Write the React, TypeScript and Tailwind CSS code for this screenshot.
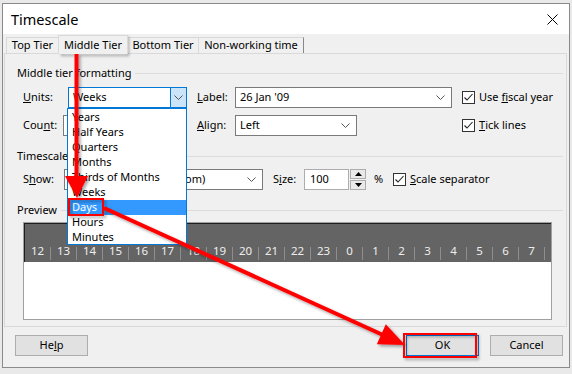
import React from "react";

const hours = [12, 13, 14, 15, 16, 17, 18, 19, 20, 21, 22, 23, 0, 1, 2, 3, 4, 5, 6, 7];
const units = ["Years", "Half Years", "Quarters", "Months", "Thirds of Months", "Weeks", "Days", "Hours", "Minutes"];

function Chevron() {
  return (
    <svg width="9" height="5" viewBox="0 0 9 5" className="shrink-0">
      <path d="M0.5 0.5 L4.5 4.5 L8.5 0.5" fill="none" stroke="#555" strokeWidth="1" />
    </svg>
  );
}

function Check({ label }: { label: React.ReactNode }) {
  return (
    <div className="flex items-center">
      <div className="w-[13px] h-[13px] border border-[#333] bg-white flex items-center justify-center">
        <svg width="11" height="11" viewBox="0 0 11 11">
          <path d="M1.5 5.5 L4 8 L9.5 2" fill="none" stroke="#222" strokeWidth="1.1" />
        </svg>
      </div>
      <span className="ml-[4px]">{label}</span>
    </div>
  );
}

function Combo({ text, className }: { text: string; className: string }) {
  return (
    <div className={`h-[21px] border border-[#7a7a7a] bg-white flex items-center pl-[4px] pr-[6px] ${className}`}>
      <span className="flex-1 whitespace-nowrap overflow-hidden">{text}</span>
      <Chevron />
    </div>
  );
}

function GroupHeader({ title }: { title: string }) {
  return (
    <div className="h-[16px] flex items-center pl-[12px] pr-[3px]">
      <span className="whitespace-nowrap">{title}</span>
      <div className="flex-1 h-px bg-[#dcdcdc] ml-[4px]" />
    </div>
  );
}

function Button({ children, className = "" }: { children: React.ReactNode; className?: string }) {
  return (
    <div className={`w-[73px] h-[21px] bg-[#e1e1e1] border flex items-center justify-center ${className}`}>
      {children}
    </div>
  );
}

export default function App() {
  return (
    <div className="relative w-[572px] h-[374px] overflow-hidden bg-[#e9e9e9] pt-[3px] pl-[2px] font-['Noto_Sans',sans-serif] text-[11px] text-black">
      {/* Dialog */}
      <div className="w-[568px] h-[365px] border border-[#8a8a8a] bg-[#f0f0f0] flex flex-col">
        {/* Title bar */}
        <div className="h-[30px] bg-white flex items-center justify-between pl-[8px] pr-[11px]">
          <span className="text-[14.5px] leading-none">Timescale</span>
          <svg width="11" height="11" viewBox="0 0 11 11">
            <path d="M0.5 0.5 L10.5 10.5 M10.5 0.5 L0.5 10.5" stroke="#000" strokeWidth="1" />
          </svg>
        </div>

        {/* Tabs */}
        <div className="mt-[1px] h-[18px] flex items-end pl-[3px]">
          <div className="w-[52px] h-[16px] border-t border-l border-[#d9d9d9] flex items-center justify-center">Top Tier</div>
          <div className="relative z-10 -mb-px w-[70px] h-[19px] border-t border-l border-r border-[#d9d9d9] bg-[#f0f0f0] flex items-start justify-center pt-px">Middle Tier</div>
          <div className="w-[71px] h-[16px] border-t border-r border-[#d9d9d9] flex items-center justify-center">Bottom Tier</div>
          <div className="w-[105px] h-[16px] border-t border-r border-r-[#888] border-[#d9d9d9] flex items-center justify-center">Non-working time</div>
        </div>

        {/* Tab page */}
        <div className="ml-[1px] w-[563px] border border-[#d9d9d9] flex flex-col pt-[11px] pb-[6px]">
          <GroupHeader title="Middle tier formatting" />

          <div className="mt-[6px] h-[21px] flex items-center pl-[18px]">
            <span className="w-[45px]"><span className="underline">U</span>nits:</span>
            <div className="w-[119px] h-[21px] border border-[#0078d7] bg-white flex items-center">
              <span className="flex-1 pl-[4px]">Weeks</span>
              <div className="w-[16px] h-full bg-[#cce4f7] border-l border-[#0078d7] flex items-center justify-center">
                <Chevron />
              </div>
            </div>
            <span className="ml-[10px] w-[38px]"><span className="underline">L</span>abel:</span>
            <Combo text="26 Jan '09" className="w-[217px]" />
            <div className="ml-[10px]">
              <Check label={<>Use <span className="underline">f</span>iscal year</>} />
            </div>
          </div>

          <div className="mt-[7px] h-[21px] flex items-center pl-[18px]">
            <span className="w-[40px]">Cou<span className="underline">n</span>t:</span>
            <div className="w-[60px] h-[21px] border border-[#7a7a7a] bg-white" />
            <span className="ml-[74px] w-[38px]"><span className="underline">A</span>lign:</span>
            <Combo text="Left" className="w-[122px]" />
            <div className="ml-[105px]">
              <Check label={<><span className="underline">T</span>ick lines</>} />
            </div>
          </div>

          <div className="mt-[12px]">
            <GroupHeader title="Timescale options" />
          </div>

          <div className="mt-[5px] h-[21px] flex items-center pl-[18px]">
            <span className="w-[41px]">S<span className="underline">h</span>ow:</span>
            <Combo text="Two tiers (Middle, Bottom)" className="w-[199px]" />
            <span className="ml-[10px] w-[31px]">S<span className="underline">i</span>ze:</span>
            <div className="w-[45px] h-[21px] border border-[#adadad] bg-white flex items-center pl-[5px]">100</div>
            <div className="w-[16px] h-[21px] flex flex-col ml-px">
              <div className="h-[10px] border border-[#adadad] bg-[#e9e9e9] flex items-center justify-center">
                <svg width="7" height="4" viewBox="0 0 7 4"><path d="M0 4 L3.5 0 L7 4 Z" fill="#000" /></svg>
              </div>
              <div className="h-[10px] mt-px border border-[#adadad] bg-[#e9e9e9] flex items-center justify-center">
                <svg width="7" height="4" viewBox="0 0 7 4"><path d="M0 0 L3.5 4 L7 0 Z" fill="#000" /></svg>
              </div>
            </div>
            <span className="ml-[8px] w-[19px]">%</span>
            <Check label={<><span className="underline">S</span>cale separator</>} />
          </div>

          <div className="mt-[12px]">
            <GroupHeader title="Preview" />
          </div>

          {/* Preview */}
          <div className="mt-[4px] ml-[18px] w-[529px] h-[98px] border border-[#a0a0a0] bg-white flex flex-col">
            <div className="h-[39px] bg-[#646464] border-t border-l border-[#1e1e1e] flex flex-col justify-end pb-[2px]">
              <div className="h-[18px] flex">
                {hours.map((h, i) => (
                  <div key={i} className="w-[26px] h-full flex">
                    <div className="w-[25px] flex items-center justify-center text-[11.5px] text-[#eeeeee]">{h}</div>
                    <div className="w-px h-[13px] self-end bg-[#8e8e8e]" />
                  </div>
                ))}
              </div>
            </div>
          </div>
        </div>

        {/* Buttons */}
        <div className="mt-[8px] flex items-center pl-[12px] pr-[6px]">
          <Button className="border-[#adadad]">
            <span>He<span className="underline">l</span>p</span>
          </Button>
          <div className="flex-1" />
          <Button className="border-[#0078d7]">OK</Button>
          <Button className="ml-[11px] border-[#adadad]">Cancel</Button>
        </div>
      </div>

      {/* Open Units dropdown list */}
      <div className="absolute left-[67px] top-[108px] w-[120px] h-[137px] border border-[#0078d7] bg-white pt-px">
        {units.map((u) => (
          <div
            key={u}
            className={`h-[15px] flex items-center pl-[4px] ${u === "Days" ? "bg-[#3399ff] text-white" : ""}`}
          >
            {u}
          </div>
        ))}
      </div>

      {/* Red annotations */}
      <svg className="absolute left-0 top-0 pointer-events-none" width="572" height="374" viewBox="0 0 572 374">
        <defs>
          <filter id="sh" x="-20%" y="-20%" width="140%" height="140%">
            <feDropShadow dx="2" dy="2" stdDeviation="1.5" floodColor="#000" floodOpacity="0.35" />
          </filter>
        </defs>
        <g filter="url(#sh)" fill="none" stroke="#ff0000">
          <rect x="60" y="36" width="66" height="17" strokeWidth="2" />
          <line x1="76.5" y1="54" x2="76.5" y2="180" strokeWidth="4" />
          <polygon points="65,176 88,176 77,198" fill="#ff0000" stroke="none" />
          <rect x="69" y="199" width="34" height="16" strokeWidth="2" />
          <line x1="104" y1="208" x2="383" y2="335" strokeWidth="4" />
          <polygon points="405,345 376.8,344.3 385.8,324.3" fill="#ff0000" stroke="none" />
          <rect x="404" y="334" width="72" height="23" strokeWidth="2" />
        </g>
      </svg>
    </div>
  );
}
